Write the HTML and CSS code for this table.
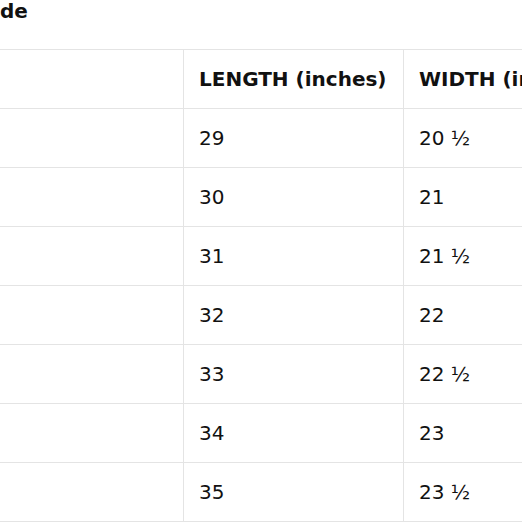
FILE: index.html
```html
<!DOCTYPE html>
<html>
<head>
<meta charset="utf-8">
<link rel="stylesheet" href="styles.css">
</head>
<body>
<div class="guide">
  <h2 class="title">Size Guide</h2>
  <table class="sizes">
    <colgroup>
      <col class="c-size">
      <col class="c-len">
      <col class="c-wid">
    </colgroup>
    <thead>
      <tr><th>SIZE</th><th>LENGTH (inches)</th><th>WIDTH (inches)</th></tr>
    </thead>
    <tbody>
      <tr><td>S</td><td>29</td><td>20 ½</td></tr>
      <tr><td>M</td><td>30</td><td>21</td></tr>
      <tr><td>L</td><td>31</td><td>21 ½</td></tr>
      <tr><td>XL</td><td>32</td><td>22</td></tr>
      <tr><td>2XL</td><td>33</td><td>22 ½</td></tr>
      <tr><td>3XL</td><td>34</td><td>23</td></tr>
      <tr><td>4XL</td><td>35</td><td>23 ½</td></tr>
    </tbody>
  </table>
</div>
</body>
</html>
```
FILE: styles.css
```css
html, body {
  margin: 0;
  padding: 0;
  background: #fff;
  overflow: hidden;
}
body {
  font-family: "DejaVu Sans", sans-serif;
  color: #111;
}
.guide {
  margin-left: -91px;
  width: 900px;
}
.title {
  margin: 0 0 26px 0;
  font-size: 20px;
  font-weight: bold;
  line-height: 23px;
}
.sizes {
  border-collapse: collapse;
  table-layout: fixed;
  width: 714px;
}
.c-size { width: 274px; }
.c-len { width: 220px; }
.c-wid { width: 220px; }
.sizes th,
.sizes td {
  border: 1px solid #e4e4e4;
  height: 59px;
  padding: 0 15px;
  text-align: left;
  font-size: 20px;
  box-sizing: border-box;
}
.sizes th {
  font-weight: bold;
}
.sizes td {
  font-weight: normal;
}
```
